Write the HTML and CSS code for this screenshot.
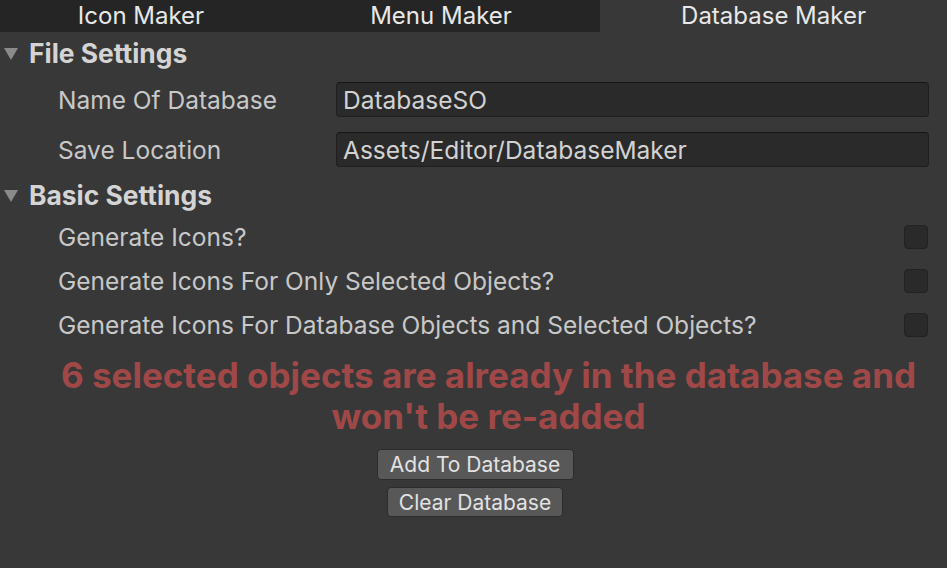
FILE: index.html
```html
<!DOCTYPE html>
<html>
<head>
<meta charset="utf-8">
<link rel="stylesheet" href="styles.css">
</head>
<body>
<div class="tabs">
  <div class="tab t1">Icon Maker</div>
  <div class="tab t2">Menu Maker</div>
  <div class="tab t3 active">Database Maker</div>
</div>
<div class="section">
  <div class="header"><span class="tri"></span>File Settings</div>
  <div class="field-row">
    <div class="label">Name Of Database</div>
    <div class="input">DatabaseSO</div>
  </div>
  <div class="field-row">
    <div class="label">Save Location</div>
    <div class="input">Assets/Editor/DatabaseMaker</div>
  </div>
</div>
<div class="section">
  <div class="header h2"><span class="tri"></span>Basic Settings</div>
  <div class="check-row"><div class="label">Generate Icons?</div><div class="box"></div></div>
  <div class="check-row"><div class="label">Generate Icons For Only Selected Objects?</div><div class="box"></div></div>
  <div class="check-row"><div class="label">Generate Icons For Database Objects and Selected Objects?</div><div class="box"></div></div>
</div>
<div class="warning">6 selected objects are already in the database and<br>won't be re-added</div>
<div class="buttons">
  <div class="btn b1">Add To Database</div>
  <div class="btn b2">Clear Database</div>
</div>
</body>
</html>
```
FILE: styles.css
```css
html, body {
  margin: 0;
  padding: 0;
  background: #383838;
  font-family: Inter, "Noto Sans", sans-serif;
  width: 947px;
  height: 568px;
  overflow: hidden;
}
.tabs {
  display: flex;
  height: 32px;
}
.tab {
  display: flex;
  align-items: center;
  justify-content: center;
  color: #e8e8e8;
  font-size: 24px;
  background: #252525;
  padding-bottom: 2px;
  box-sizing: border-box;
  height: 32px;
}
.t1 { width: 282px; }
.t2 { width: 318px; }
.t3 { flex: 1; }
.tab.active {
  background: #383838;
}
.section {
  display: flex;
  flex-direction: column;
}
.header {
  display: flex;
  align-items: center;
  height: 41px;
  padding-left: 4px;
  font-weight: 700;
  font-size: 26.4px;
  color: #d4d4d4;
}
.header.h2 {
  margin-top: 7px;
}
.tri {
  width: 0;
  height: 0;
  border-left: 7px solid transparent;
  border-right: 7px solid transparent;
  border-top: 12px solid #8a8a8a;
  margin-right: 11px;
  margin-top: 2px;
}
.field-row {
  display: flex;
  align-items: center;
  height: 35px;
  margin-top: 9px;
  margin-right: 18px;
}
.field-row + .field-row {
  margin-top: 15px;
}
.label {
  padding-left: 58px;
  width: 336px;
  box-sizing: border-box;
  color: #c8c8c8;
  font-size: 24.5px;
  white-space: nowrap;
}
.input {
  flex: 1;
  height: 35px;
  box-sizing: border-box;
  background: #2a2a2a;
  border: 1px solid #1f1f1f;
  border-top-color: #151515;
  border-radius: 4px;
  padding-left: 6px;
  display: flex;
  align-items: center;
  color: #d2d2d2;
  font-size: 24.5px;
}
.check-row {
  display: flex;
  align-items: center;
  justify-content: space-between;
  height: 44px;
  margin-right: 19px;
}
.check-row .label {
  width: auto;
}
.box {
  width: 24px;
  height: 24px;
  box-sizing: border-box;
  background: #2a2a2a;
  border: 1px solid #222;
  border-radius: 4px;
}
.warning {
  margin-top: 8px;
  padding-left: 30px;
  text-align: center;
  color: #a04848;
  font-weight: 700;
  font-size: 35px;
  line-height: 41px;
  white-space: nowrap;
}
.buttons {
  display: flex;
  flex-direction: column;
  align-items: center;
  margin-top: 12px;
  padding-left: 3px;
  gap: 7px;
}
.btn {
  height: 31px;
  box-sizing: border-box;
  background: #585858;
  border: 1px solid #2c2c2c;
  border-radius: 4px;
  color: #e2e2e2;
  font-size: 21px;
  display: flex;
  align-items: center;
  justify-content: center;
}
.b1 { width: 197px; }
.b2 { width: 176px; height: 30px; }
```
